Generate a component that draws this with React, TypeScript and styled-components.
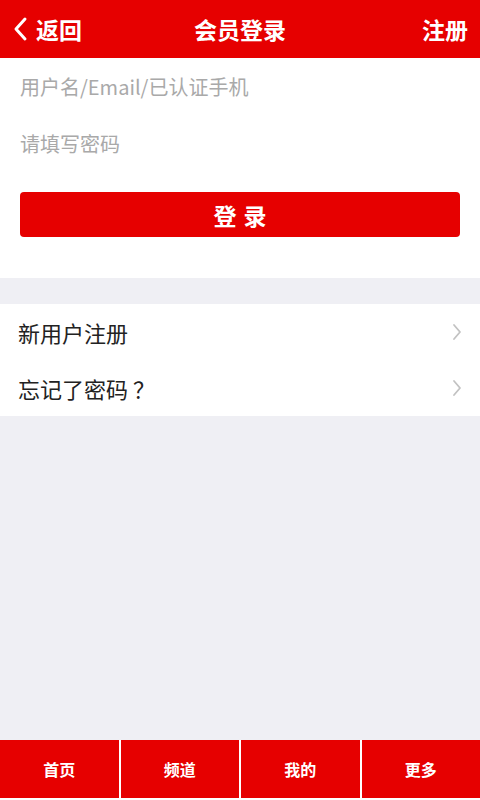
import React from "react";
import styled, { createGlobalStyle } from "styled-components";

const RED = "#e60000";
const FONT = `"Noto Sans CJK SC", "Noto Sans", sans-serif`;

const Global = createGlobalStyle`
  html, body { margin: 0; padding: 0; background: #efeff4; }
  body { font-family: ${FONT}; }
  * { box-sizing: border-box; }
`;

const Page = styled.div`
  min-height: 800px;
  display: flex;
  flex-direction: column;
  background: #efeff4;
`;

const Header = styled.header`
  height: 58px;
  background: ${RED};
  display: grid;
  grid-template-columns: 1fr auto 1fr;
  align-items: center;
  padding: 0 12px 0 12px;
  color: #fff;
  font-weight: 700;
  font-size: 23px;
`;

const Back = styled.div`
  display: flex;
  align-items: center;
  gap: 8px;
  justify-self: start;
`;

const Title = styled.div`
  font-size: 23px;
`;

const Right = styled.div`
  justify-self: end;
`;

const Form = styled.section`
  background: #fff;
  padding: 0 20px 41px;
  display: flex;
  flex-direction: column;
`;

const Field = styled.input`
  height: 57px;
  border: none;
  outline: none;
  background: transparent;
  font-family: ${FONT};
  font-size: 20px;
  padding: 0;
  color: #333;
  &::placeholder { color: #a9a9a9; }
`;

const LoginButton = styled.button`
  margin-top: 20px;
  height: 45px;
  border: none;
  border-radius: 4px;
  background: ${RED};
  color: #fff;
  font-family: ${FONT};
  font-weight: 700;
  font-size: 23px;
  letter-spacing: 7px;
  text-indent: 7px;
`;

const List = styled.ul`
  list-style: none;
  margin: 26px 0 0;
  padding: 0;
  background: #fff;
`;

const Row = styled.li`
  height: 56px;
  display: flex;
  align-items: center;
  justify-content: space-between;
  padding: 0 18px 0 18px;
  font-size: 22px;
  color: #222;
`;

const Spacer = styled.div`
  flex: 1;
`;

const Footer = styled.nav`
  height: 60px;
  display: grid;
  grid-template-columns: repeat(4, 1fr);
  gap: 2px;
  background: #fff;
  padding-bottom: 2px;
`;

const Tab = styled.div`
  background: ${RED};
  color: #fff;
  font-weight: 700;
  font-size: 16px;
  display: flex;
  align-items: center;
  justify-content: center;
`;

const BackIcon = () => (
  <svg width="16" height="26" viewBox="0 0 16 26">
    <polyline points="13,3 4,13 13,23" fill="none" stroke="#fff" strokeWidth="3" strokeLinecap="round" strokeLinejoin="round" />
  </svg>
);

const Chevron = () => (
  <svg width="10" height="18" viewBox="0 0 10 18">
    <polyline points="2,2 8,9 2,16" fill="none" stroke="#c2c2c2" strokeWidth="1.8" strokeLinecap="round" strokeLinejoin="round" />
  </svg>
);

export default function App() {
  return (
    <Page>
      <Global />
      <Header>
        <Back>
          <BackIcon />
          <span>返回</span>
        </Back>
        <Title>会员登录</Title>
        <Right>注册</Right>
      </Header>
      <Form>
        <Field placeholder="用户名/Email/已认证手机" />
        <Field type="password" placeholder="请填写密码" />
        <LoginButton>登录</LoginButton>
      </Form>
      <List>
        <Row>
          <span>新用户注册</span>
          <Chevron />
        </Row>
        <Row>
          <span>忘记了密码 ？</span>
          <Chevron />
        </Row>
      </List>
      <Spacer />
      <Footer>
        {["首页", "频道", "我的", "更多"].map((t) => (
          <Tab key={t}>{t}</Tab>
        ))}
      </Footer>
    </Page>
  );
}
